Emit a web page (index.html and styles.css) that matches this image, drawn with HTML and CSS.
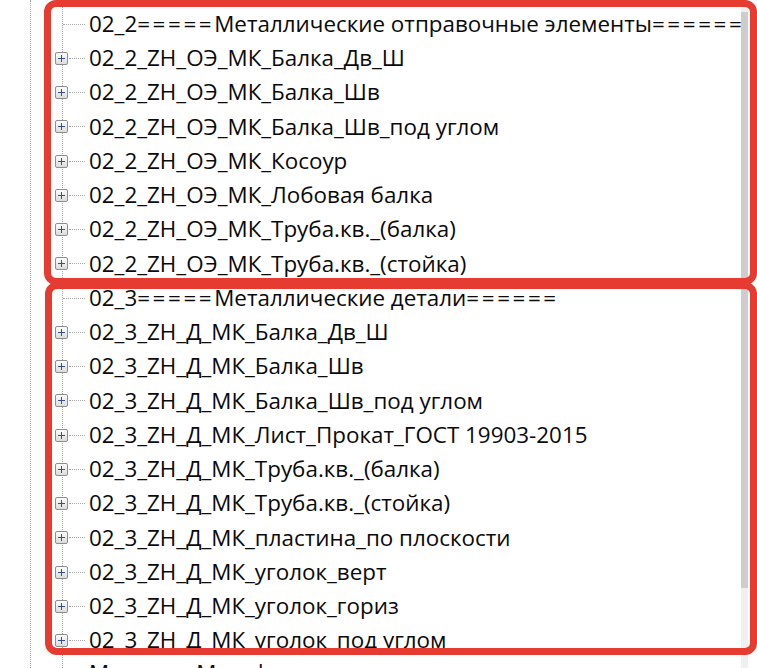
FILE: index.html
```html
<!DOCTYPE html>
<html lang="ru">
<head>
<meta charset="utf-8">
<title>Tree</title>
<link rel="stylesheet" href="styles.css">
</head>
<body>
<div class="view">
  <div class="outer-guide"></div>
  <div class="tree">
    <div class="branch">
      <div class="row leaf"><span class="dash long"></span><span class="label">02_2<span class="eq">=====</span>Металлические отправочные элементы<span class="eq">=========</span></span></div>
      <div class="row"><span class="toggle"></span><span class="dash"></span><span class="label">02_2_ZH_ОЭ_МК_Балка_Дв_Ш</span></div>
      <div class="row"><span class="toggle"></span><span class="dash"></span><span class="label">02_2_ZH_ОЭ_МК_Балка_Шв</span></div>
      <div class="row"><span class="toggle"></span><span class="dash"></span><span class="label">02_2_ZH_ОЭ_МК_Балка_Шв_под углом</span></div>
      <div class="row"><span class="toggle"></span><span class="dash"></span><span class="label">02_2_ZH_ОЭ_МК_Косоур</span></div>
      <div class="row"><span class="toggle"></span><span class="dash"></span><span class="label">02_2_ZH_ОЭ_МК_Лобовая балка</span></div>
      <div class="row"><span class="toggle"></span><span class="dash"></span><span class="label">02_2_ZH_ОЭ_МК_Труба.кв._(балка)</span></div>
      <div class="row"><span class="toggle"></span><span class="dash"></span><span class="label">02_2_ZH_ОЭ_МК_Труба.кв._(стойка)</span></div>
      <div class="row leaf"><span class="dash long"></span><span class="label">02_3<span class="eq">=====</span>Металлические детали<span class="eq">======</span></span></div>
      <div class="row"><span class="toggle"></span><span class="dash"></span><span class="label">02_3_ZH_Д_МК_Балка_Дв_Ш</span></div>
      <div class="row"><span class="toggle"></span><span class="dash"></span><span class="label">02_3_ZH_Д_МК_Балка_Шв</span></div>
      <div class="row"><span class="toggle"></span><span class="dash"></span><span class="label">02_3_ZH_Д_МК_Балка_Шв_под углом</span></div>
      <div class="row"><span class="toggle"></span><span class="dash"></span><span class="label">02_3_ZH_Д_МК_Лист_Прокат_ГОСТ 19903-2015</span></div>
      <div class="row"><span class="toggle"></span><span class="dash"></span><span class="label">02_3_ZH_Д_МК_Труба.кв._(балка)</span></div>
      <div class="row"><span class="toggle"></span><span class="dash"></span><span class="label">02_3_ZH_Д_МК_Труба.кв._(стойка)</span></div>
      <div class="row"><span class="toggle"></span><span class="dash"></span><span class="label">02_3_ZH_Д_МК_пластина_по плоскости</span></div>
      <div class="row"><span class="toggle"></span><span class="dash"></span><span class="label">02_3_ZH_Д_МК_уголок_верт</span></div>
      <div class="row"><span class="toggle"></span><span class="dash"></span><span class="label">02_3_ZH_Д_МК_уголок_гориз</span></div>
      <div class="row"><span class="toggle"></span><span class="dash"></span><span class="label">02_3_ZH_Д_МК_уголок_под углом</span></div>
      <div class="row leaf last"><span class="dash long"></span><span class="label">Маркеры Мачтфарм</span></div>
    </div>
  </div>
  <div class="scrollbar"><div class="thumb"></div></div>
  <div class="mark mark-top"></div>
  <div class="mark mark-bottom"></div>
</div>
</body>
</html>
```

FILE: styles.css
```css
html, body {
  margin: 0;
  padding: 0;
  background: #ffffff;
}

.view {
  position: relative;
  width: 757px;
  height: 668px;
  overflow: hidden;
  display: flex;
  font-family: "Open Sans", "Noto Sans", sans-serif;
  font-size: 22.4px;
  color: #0a0a0a;
}

.outer-guide {
  flex: none;
  width: 31px;
  border-right: 1px dotted #a8a8a8;
  box-sizing: border-box;
}

.tree {
  width: 710px;
  flex: none;
  overflow: hidden;
  padding-top: 7px;
  box-sizing: border-box;
}

.branch {
  margin-left: 31px;
  border-left: 1px dotted #a8a8a8;
}

.row {
  height: 34.25px;
  display: flex;
  align-items: center;
  white-space: nowrap;
}

.row.last {
  margin-top: -2px;
}

.toggle {
  flex: none;
  width: 11px;
  height: 11px;
  margin-left: -8px;
  border: 1px solid #8e8e8e;
  border-radius: 2px;
  background: linear-gradient(#fdfdfd, #dcdcdc);
  position: relative;
}

.toggle::before,
.toggle::after {
  content: "";
  position: absolute;
  background: #34509a;
}

.toggle::before {
  left: 2px;
  top: 5px;
  width: 7px;
  height: 1px;
}

.toggle::after {
  left: 5px;
  top: 2px;
  width: 1px;
  height: 7px;
}

.dash {
  flex: none;
  width: 16px;
  height: 0;
  border-top: 1px dotted #a8a8a8;
  margin-left: 1px;
}

.dash.long {
  width: 22px;
  margin-left: 0;
}

.label {
  margin-left: 4px;
  line-height: 1;
}

.eq {
  letter-spacing: 2.6px;
}

.scrollbar {
  width: 7px;
  flex: none;
  background: #f0f0f0;
  padding-top: 12px;
}

.thumb {
  height: 576px;
  background: #cdcdcd;
}

.mark {
  position: absolute;
  border: 7px solid #e53b30;
  border-radius: 12px;
  box-sizing: border-box;
}

.mark-top {
  left: 44px;
  top: 0;
  width: 713px;
  height: 285px;
}

.mark-bottom {
  left: 45px;
  top: 282px;
  width: 712px;
  height: 373px;
}
```
